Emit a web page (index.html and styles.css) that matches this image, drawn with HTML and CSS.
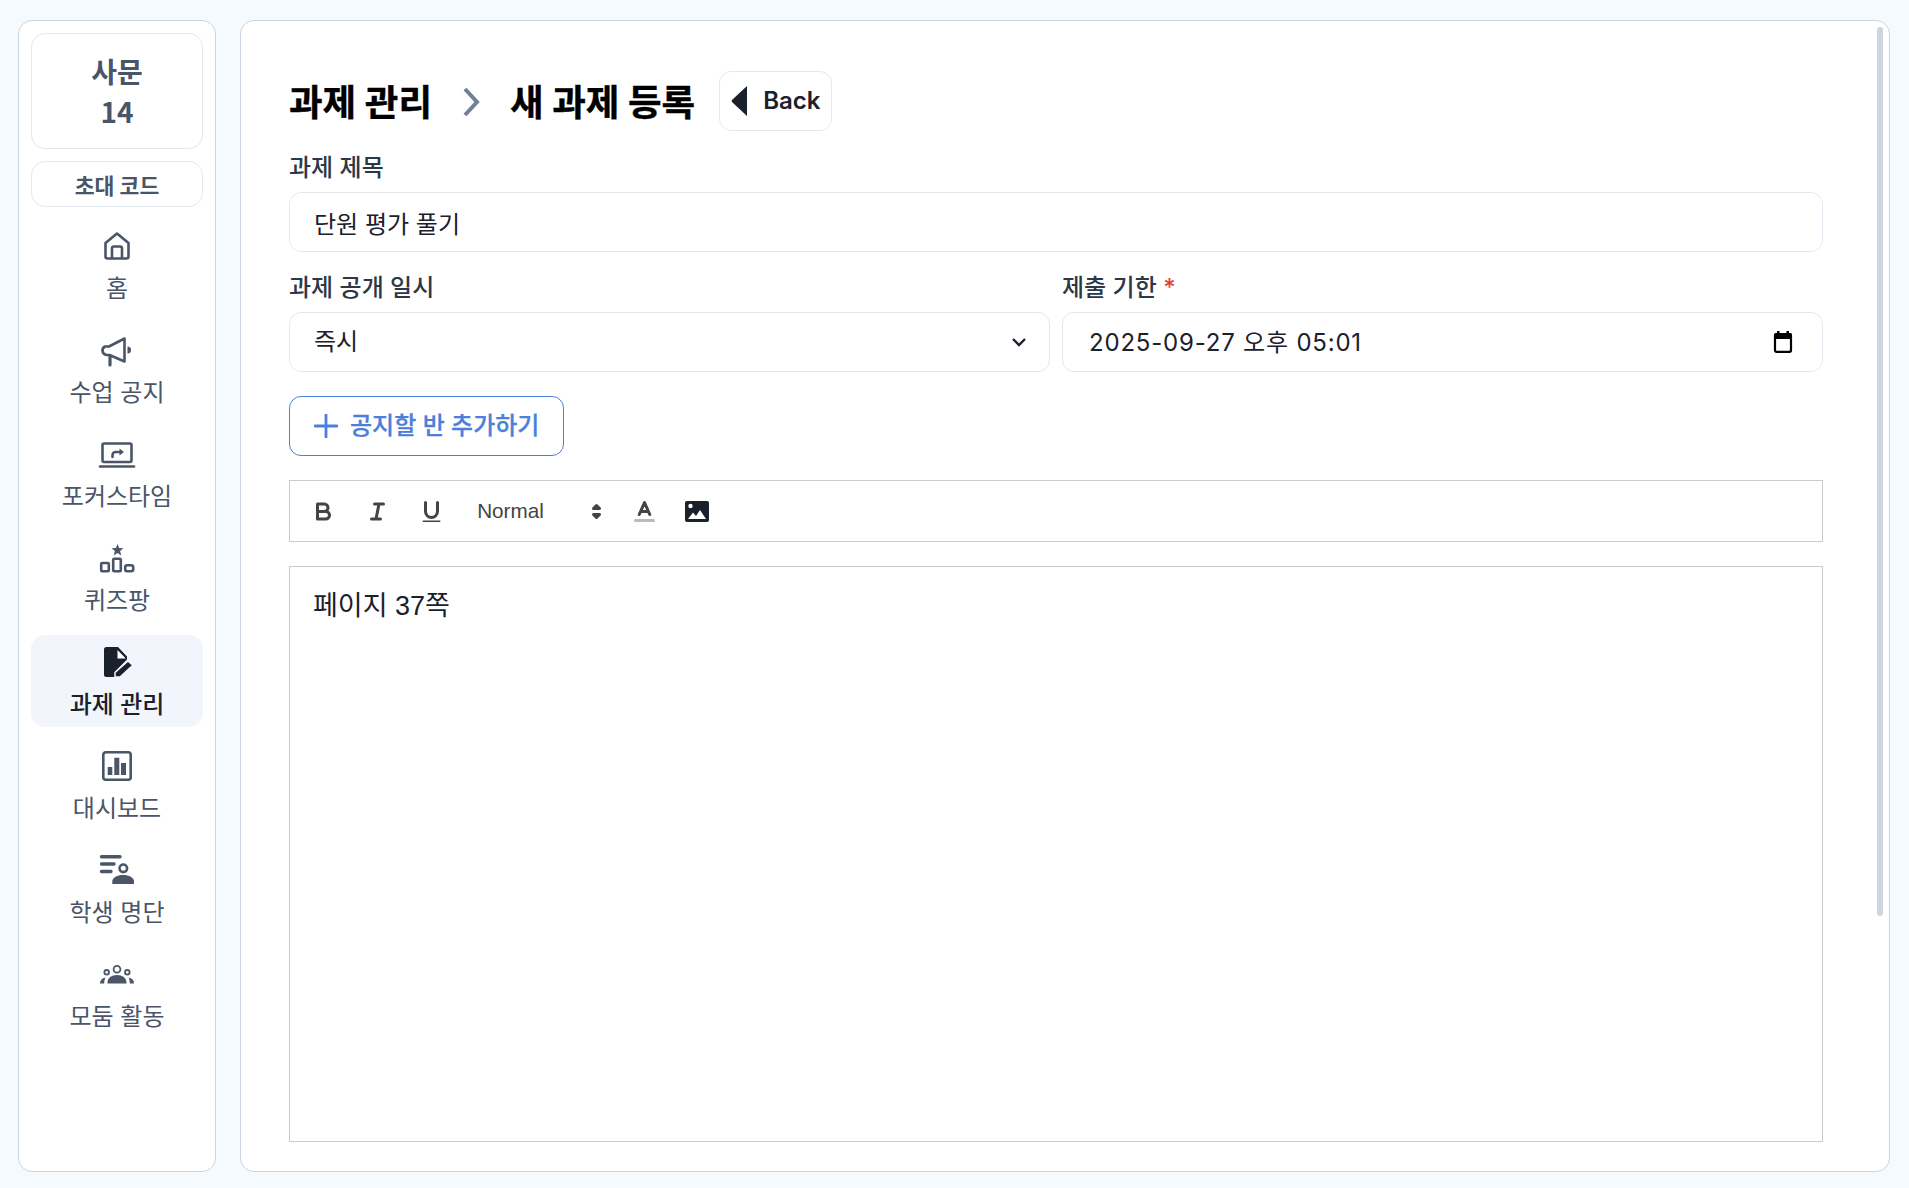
FILE: index.html
```html
<!DOCTYPE html>
<html lang="ko">
<head>
<meta charset="utf-8">
<title>새 과제 등록</title>
<link rel="stylesheet" href="styles.css">
</head>
<body>
<div class="page">
  <aside class="sidebar">
    <div class="class-card"><div>사문</div><div>14</div></div>
    <div class="invite-card">초대 코드</div>
    <nav class="nav">
      <a class="nav-item">
        <svg class="nav-icon" viewBox="0 0 40 32"><path class="ln" d="M8.500 13 20 3.500 31.500 13v13.500a2 2 0 0 1-2 2h-19a2 2 0 0 1-2-2Z"/><path class="ln" d="M15 28v-9.500a2 2 0 0 1 2-2h6a2 2 0 0 1 2 2V28"/></svg>
        <span>홈</span>
      </a>
      <a class="nav-item">
        <svg class="nav-icon" viewBox="0 0 40 32"><path class="ln" d="M27.500 5v23l-15-6.500h-3a4.500 4.500 0 0 1-1.500-8.500h4Z" transform="translate(0 -.5)"/><path class="ln wide" d="M13 22v9"/><path class="fl" d="M30.500 12.500a3.500 3.500 0 0 1 0 7Z"/></svg>
        <span>수업 공지</span>
      </a>
      <a class="nav-item">
        <svg class="nav-icon" viewBox="0 0 40 32"><rect class="ln" x="5.500" y="5.500" width="29" height="18.500" rx="1.500"/><path class="ln" d="M3 28.500h34"/><path class="ln" d="M15.500 19v-2a3 3 0 0 1 3-3h5"/><path class="fl" d="M22.500 10.500 27 14l-4.500 3.500Z"/></svg>
        <span>포커스타임</span>
      </a>
      <a class="nav-item">
        <svg class="nav-icon" viewBox="0 0 40 32"><path class="fl" d="M20.500 2 22.100 6.100l4.400.2-3.400 2.700 1.200 4.400-3.800-2.400-3.800 2.400 1.200-4.400-3.400-2.700 4.400-.2Z"/><rect class="ln" x="4.200" y="21" width="7.600" height="8.200" rx="1"/><rect class="ln" x="16.200" y="16.800" width="7.600" height="12.400" rx="1"/><rect class="ln" x="28.200" y="23.200" width="8" height="6" rx="2"/></svg>
        <span>퀴즈팡</span>
      </a>
      <a class="nav-item is-active">
        <svg class="nav-icon" viewBox="0 0 40 32"><path class="dk" d="M9.500 1H21l9 9.500v3L18 25.500V31H9.500A2.500 2.500 0 0 1 7 28.500v-25A2.500 2.500 0 0 1 9.500 1Z"/><path class="wh" d="M20.500 4v8.500h8.300Z"/><path class="dk pen" d="M18 31v-4.500L31 15l4.800 4.300L23 31Z"/></svg>
        <span>과제 관리</span>
      </a>
      <a class="nav-item">
        <svg class="nav-icon" viewBox="0 0 40 32"><rect class="ln" x="6.300" y="2.300" width="27.400" height="27.400" rx="2.500"/><path class="fl" d="M10.700 17h4.600v8h-4.600ZM17.300 7.700h5V25h-5ZM24 13h5v12h-5Z"/></svg>
        <span>대시보드</span>
      </a>
      <a class="nav-item">
        <svg class="nav-icon" viewBox="0 0 40 32"><path class="ln thick" d="M4.500 2.800H23M4.500 10H17M4.500 17.500H14"/><circle class="ln" cx="26.300" cy="14.300" r="3.800"/><path class="fl" d="M15.300 30v-2.500c0-4 5-6.500 10.800-6.500S37 23.500 37 27.500V30Z"/></svg>
        <span>학생 명단</span>
      </a>
      <a class="nav-item">
        <svg class="nav-icon" viewBox="0 0 40 32"><circle class="ln thin" cx="20" cy="11.300" r="3.400"/><circle class="ln thin" cx="9.700" cy="14.300" r="2.300"/><circle class="ln thin" cx="30.300" cy="14.300" r="2.300"/><path class="fl" d="M10.500 25.500v-1c0-4.500 4-7.500 9.500-7.500s9.500 3 9.500 7.500v1ZM3 25.500c0-3.500 2-5.500 5.500-6-.8 1.500-1.300 3.500-1.300 6ZM37 25.500c0-3.500-2-5.500-5.500-6 .8 1.500 1.300 3.500 1.300 6Z"/></svg>
        <span>모둠 활동</span>
      </a>
    </nav>
  </aside>

  <main class="main">
    <div class="scroll-thumb"></div>
    <header class="head">
      <h1 class="crumb">과제 관리</h1>
      <svg class="crumb-sep" viewBox="0 0 18 32"><path d="M3 3 15 16 3 29"/></svg>
      <h1 class="crumb">새 과제 등록</h1>
      <button class="back"><svg class="back-icon" viewBox="0 0 16 32"><path d="M16 1v30L1.500 17.500a2 2 0 0 1 0-3Z"/></svg><span class="back-text">Back</span></button>
    </header>

    <div class="field field-first">
      <label class="label">과제 제목</label>
      <div class="control">단원 평가 풀기</div>
    </div>

    <div class="two-col">
      <div class="field">
        <label class="label">과제 공개 일시</label>
        <div class="control control-select">
          <span class="select-value">즉시</span>
          <svg class="chev" viewBox="0 0 16 10"><path d="M2 2l6 6 6-6"/></svg>
        </div>
      </div>
      <div class="field">
        <label class="label">제출 기한 <span class="req">*</span></label>
        <div class="control control-date">
          <span class="date-value">2025-09-27 오후 05:01</span>
          <svg class="cal" viewBox="0 0 20 22"><path class="cal-top" d="M4 0h2.500v2h7V0H16v2h1a2 2 0 0 1 2 2v4H1V4a2 2 0 0 1 2-2h1Z"/><rect class="cal-box" x="2" y="3" width="16" height="17.800" rx="1.500"/></svg>
        </div>
      </div>
    </div>

    <button class="add-class">
      <svg class="plus" viewBox="0 0 24 24"><path d="M12 1v22M1 12h22"/></svg><span class="add-text">공지할 반 추가하기</span>
    </button>

    <div class="toolbar">
      <button class="tool"><svg viewBox="0 0 18 18"><path class="q" d="M5,4H9.500A2.500,2.500,0,0,1,12,6.500v0A2.500,2.500,0,0,1,9.500,9H5A0,0,0,0,1,5,9V4A0,0,0,0,1,5,4Z"/><path class="q" d="M5,9h5.500A2.500,2.500,0,0,1,13,11.500v0A2.500,2.500,0,0,1,10.500,14H5a0,0,0,0,1,0,0V9A0,0,0,0,1,5,9Z"/></svg></button>
      <button class="tool"><svg viewBox="0 0 18 18"><path class="q" d="M7 4h6M5 14h6M8 14l2-10"/></svg></button>
      <button class="tool"><svg viewBox="0 0 18 18"><path class="q" d="M5,3V9a4,4,0,0,0,4,4H9a4,4,0,0,0,4-4V3"/><rect class="qf" height="1" rx=".5" width="12" x="3" y="15"/></svg></button>
      <div class="picker"><span>Normal</span><svg viewBox="0 0 18 18"><path class="qf q" d="M7 11l2 2 2-2ZM7 7l2-2 2 2Z"/></svg></div>
      <button class="tool"><svg viewBox="0 0 18 18"><path class="q q-label" d="M3 15h12"/><path class="q" d="M5.500 11 9 3l3.500 8M11.630 9H6.380"/></svg></button>
      <button class="tool tool-img"><svg viewBox="0 0 24 21"><path class="img" d="M2 0h20a2 2 0 0 1 2 2v17a2 2 0 0 1-2 2H2a2 2 0 0 1-2-2V2a2 2 0 0 1 2-2Z"/><circle class="img-w" cx="5.500" cy="5" r="2.200"/><path class="img-w" d="M3 18l5-6.500 3 3.500 4-6 6 9Z"/></svg></button>
    </div>
    <div class="editor">페이지 37쪽</div>
  </main>
</div>
</body>
</html>
```
FILE: styles.css
```css
* { box-sizing: border-box; }
html, body { margin: 0; height: 100%; }
body {
  background: #f5fafe;
  font-family: "Inter", "Noto Sans CJK KR", sans-serif;
  color: #1a202c;
  overflow: hidden;
}
button { font-family: inherit; background: none; cursor: pointer; }
.page {
  display: flex;
  gap: 24px;
  height: 1188px;
  padding: 20px 19px 16px 18px;
}

/* sidebar */
.sidebar {
  flex: 0 0 198px;
  background: #fff;
  border: 1px solid #cbd5e0;
  border-radius: 14px;
  padding: 12px;
  display: flex;
  flex-direction: column;
  gap: 12px;
}
.class-card {
  height: 116px;
  padding-top: 0;
  border: 1px solid #e2e8f0;
  border-radius: 14px;
  display: flex;
  flex-direction: column;
  justify-content: center;
  align-items: center;
  font-family: "Noto Sans CJK KR", sans-serif;
  font-size: 28px;
  line-height: 40px;
  font-weight: 700;
  color: #4a5568;
}
.invite-card {
  height: 46px;
  border: 1px solid #e2e8f0;
  border-radius: 14px;
  display: flex;
  justify-content: center;
  align-items: center;
  font-size: 21.600px;
  font-weight: 700;
  color: #4a5568;
}
.nav { display: flex; flex-direction: column; gap: 12px; }
.nav-item {
  height: 92px;
  border-radius: 14px;
  padding-top: 11px;
  display: flex;
  flex-direction: column;
  align-items: center;
  font-size: 24px;
  line-height: 36px;
  font-weight: 400;
  color: #4a5568;
}
.nav-item span { margin-top: 9px; }
.nav-item.is-active { background: #f2f6fc; color: #1a202c; font-weight: 500; }
.nav-icon { width: 40px; height: 32px; overflow: visible; flex: none; }
.ln { fill: none; stroke: #4a5568; stroke-width: 2.600; stroke-linecap: round; stroke-linejoin: round; }
.ln.wide { stroke-width: 3.200; }
.ln.thick { stroke-width: 3.400; }
.ln.thin { stroke-width: 1.800; }
.fl { fill: #4a5568; }
.dk { fill: #1a202c; }
.wh { fill: #fff; }
.pen { stroke: #f2f6fc; stroke-width: 1.500; }

/* main */
.main {
  flex: 1;
  position: relative;
  background: #fff;
  border: 1px solid #cbd5e0;
  border-radius: 14px;
  padding: 50px 66px 0 48px;
  overflow: hidden;
}
.scroll-thumb {
  position: absolute;
  top: 6px;
  right: 6px;
  width: 6px;
  height: 889px;
  border-radius: 3px;
  background: #cbd5e0;
}
.head { display: flex; align-items: center; height: 60px; }
.crumb { margin: 4px 0 0; font-size: 36.500px; line-height: 56px; font-weight: 700; -webkit-text-stroke: .4px #000; color: #000; }
.crumb-sep { width: 18px; height: 32px; margin: 2px 30px 0 30px; fill: none; stroke: #718096; stroke-width: 4; }
.back {
  margin-left: 24px;
  width: 113px;
  height: 60px;
  border: 1px solid #e2e8f0;
  border-radius: 12px;
  padding: 0 0 0 11px;
  display: flex;
  align-items: center;
  gap: 16px;
  font-size: 24px;
  font-weight: 600;
  color: #1a202c;
}
.back-icon { width: 16px; height: 32px; fill: #1a202c; flex: none; }
.back-text { margin-bottom: 2px; }

.field { display: flex; flex-direction: column; flex: 1; min-width: 0; }
.label {
  font-size: 24px;
  line-height: 30px;
  font-weight: 500;
  color: #2d3748;
  margin: 21px 0 9px;
}
.field-first .label { margin: 22px 0 9px; }
.req { color: #e53e3e; }
.two-col { display: flex; gap: 12px; }
.control {
  height: 60px;
  border: 1px solid #e2e8f0;
  border-radius: 12px;
  padding: 0 24px;
  display: flex;
  align-items: center;
  justify-content: space-between;
  font-size: 24px;
  color: #1a202c;
}
.select-value { margin-bottom: 6px; }
.date-value { margin-bottom: 4px; }
.control-date { padding: 0 29px 0 26px; letter-spacing: .8px; }
.chev { width: 16px; height: 10px; margin-right: -2px; fill: none; stroke: #1a202c; stroke-width: 2.400; }
.cal { width: 20px; height: 22px; }
.cal-top { fill: #000; }
.cal-box { fill: none; stroke: #000; stroke-width: 2.200; }

.add-class {
  margin-top: 24px;
  display: flex;
  align-items: center;
  gap: 12px;
  width: 275px;
  height: 60px;
  border: 1px solid #4a80d9;
  border-radius: 12px;
  padding: 0 0 0 24px;
  font-size: 24px;
  font-weight: 500;
  -webkit-text-stroke: .25px #4a80d9;
  color: #4a80d9;
}
.add-text { margin-bottom: 6px; }
.plus { width: 24px; height: 24px; fill: none; stroke: #4a80d9; stroke-width: 2.800; stroke-linecap: round; flex: none; }

.toolbar {
  margin-top: 24px;
  height: 62px;
  border: 1px solid #ccc;
  padding-left: 6px;
  display: flex;
  align-items: center;
}
.tool {
  width: 54.400px;
  height: 40px;
  border: 0;
  padding: 0;
  display: flex;
  align-items: center;
  justify-content: center;
}
.tool svg { width: 27px; height: 27px; }
.tool-img { width: 51px; }
.tool-img svg { width: 24px; height: 21px; }
.q { fill: none; stroke: #444; stroke-width: 2; stroke-linecap: round; stroke-linejoin: round; }
.q-label { stroke: #bbb; }
.qf { fill: #444; }
.picker {
  width: 158px;
  display: flex;
  align-items: center;
  padding-left: 18px;
  font-family: "Liberation Sans", Arial, sans-serif;
  font-size: 20.700px;
  color: #444;
}
.picker span { width: 106px; }
.picker svg { width: 27px; height: 27px; flex: none; }
.img { fill: #1a202c; }
.img-w { fill: #fff; }

.editor {
  margin-top: 24px;
  height: 576px;
  border: 1px solid #ccc;
  padding: 21px 23px;
  font-family: "Liberation Sans", "Noto Sans CJK KR", sans-serif;
  font-size: 27px;
  line-height: 36px;
  color: #1a202c;
}
```
